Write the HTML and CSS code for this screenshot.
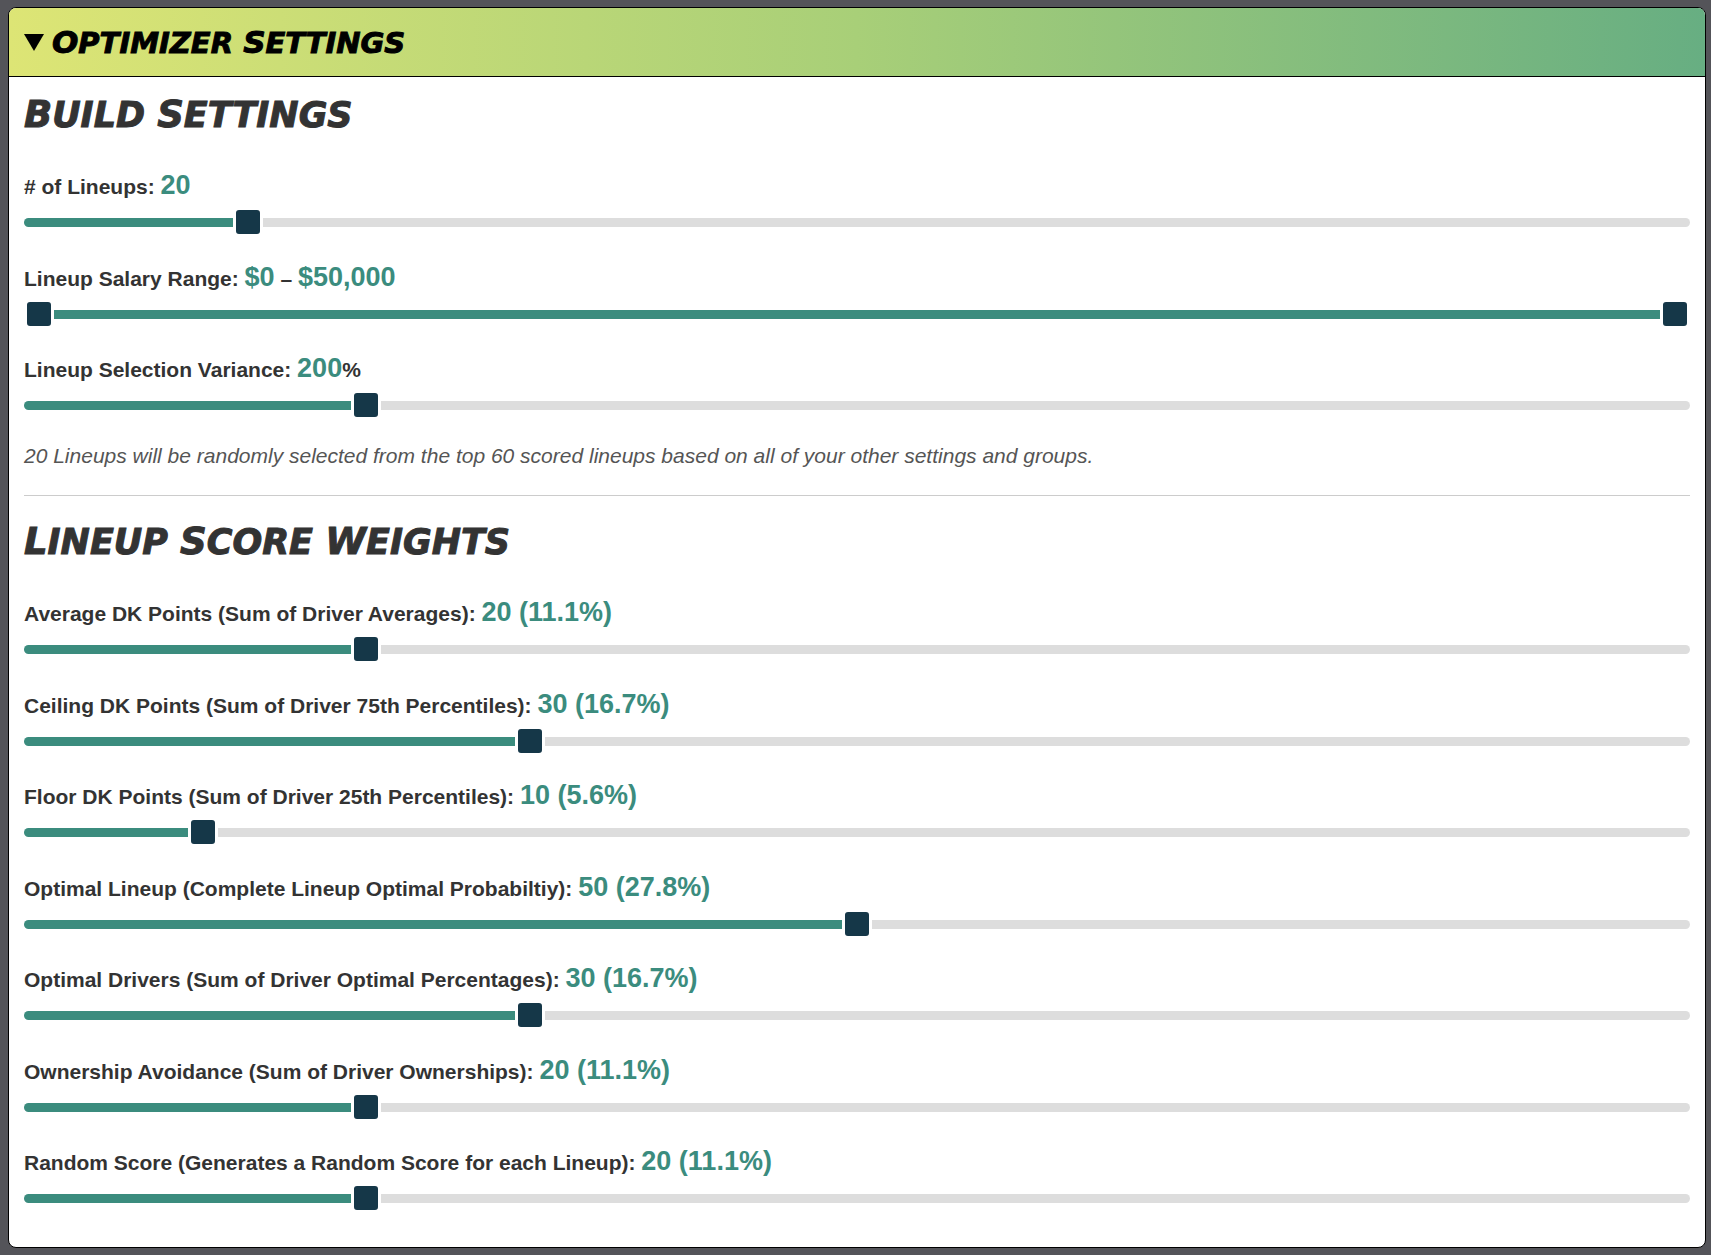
FILE: index.html
```html
<!DOCTYPE html>
<html lang="en">
<head>
    <meta charset="UTF-8">
    <meta name="viewport" content="width=device-width, initial-scale=1.0">
    <title>Optimizer Settings</title>
    <link rel="stylesheet" href="styles.css">
</head>
<body>
    <details class="panel" open>
        <summary class="panel-header">
            <svg class="arrow" viewBox="0 0 20 17" aria-hidden="true"><path d="M0 0H20L10 17Z"/></svg>
            <h2 class="title"><span>Optimizer</span> <span>Settings</span></h2>
        </summary>
        <div class="panel-body">
            <section>
                <h3 class="title"><span>Build</span> <span>Settings</span></h3>
                <div class="setting">
                    <label for="lineups"># of Lineups: <output id="lineupsValue">20</output></label>
                    <input type="range" id="lineups" min="1" max="150" value="20">
                </div>
                <div class="setting">
                    <label for="minSalary">Lineup Salary Range: <output id="minSalaryValue">$0</output> – <output id="maxSalaryValue">$50,000</output></label>
                    <div class="double-range">
                        <input type="range" id="minSalary" min="0" max="50000" step="100" value="0">
                        <input type="range" id="maxSalary" min="0" max="50000" step="100" value="50000" aria-label="Maximum lineup salary">
                    </div>
                </div>
                <div class="setting">
                    <label for="variance">Lineup Selection Variance: <output id="varianceValue">200</output>%</label>
                    <input type="range" id="variance" min="0" max="1000" step="10" value="200">
                </div>
                <p class="note" id="note">20 Lineups will be randomly selected from the top 60 scored lineups based on all of your other settings and groups.</p>
            </section>
            <hr>
            <section>
                <h3 class="title"><span>Lineup</span> <span>Score</span> <span>Weights</span></h3>
                <div class="setting">
                    <label for="average">Average DK Points (Sum of Driver Averages): <output>20 (11.1%)</output></label>
                    <input type="range" class="weight" id="average" min="0" max="100" value="20">
                </div>
                <div class="setting">
                    <label for="ceiling">Ceiling DK Points (Sum of Driver 75th Percentiles): <output>30 (16.7%)</output></label>
                    <input type="range" class="weight" id="ceiling" min="0" max="100" value="30">
                </div>
                <div class="setting">
                    <label for="floor">Floor DK Points (Sum of Driver 25th Percentiles): <output>10 (5.6%)</output></label>
                    <input type="range" class="weight" id="floor" min="0" max="100" value="10">
                </div>
                <div class="setting">
                    <label for="optimalLineup">Optimal Lineup (Complete Lineup Optimal Probabiltiy): <output>50 (27.8%)</output></label>
                    <input type="range" class="weight" id="optimalLineup" min="0" max="100" value="50">
                </div>
                <div class="setting">
                    <label for="optimalDrivers">Optimal Drivers (Sum of Driver Optimal Percentages): <output>30 (16.7%)</output></label>
                    <input type="range" class="weight" id="optimalDrivers" min="0" max="100" value="30">
                </div>
                <div class="setting">
                    <label for="ownership">Ownership Avoidance (Sum of Driver Ownerships): <output>20 (11.1%)</output></label>
                    <input type="range" class="weight" id="ownership" min="0" max="100" value="20">
                </div>
                <div class="setting">
                    <label for="random">Random Score (Generates a Random Score for each Lineup): <output>20 (11.1%)</output></label>
                    <input type="range" class="weight" id="random" min="0" max="100" value="20">
                </div>
            </section>
        </div>
    </details>

    <script>
        const $ = id => document.getElementById(id);
        const weights = [...document.querySelectorAll('.weight')];

        function fraction(input) {
            return (input.value - input.min) / (input.max - input.min);
        }

        function update() {
            document.querySelectorAll('input[type=range]').forEach(input => {
                input.style.setProperty('--pos', fraction(input));
            });

            const range = document.querySelector('.double-range');
            range.style.setProperty('--from', fraction($('minSalary')));
            range.style.setProperty('--to', fraction($('maxSalary')));

            const lineups = Number($('lineups').value);
            const variance = Number($('variance').value);
            $('lineupsValue').textContent = lineups;
            $('minSalaryValue').textContent = '$' + Number($('minSalary').value).toLocaleString('en-US');
            $('maxSalaryValue').textContent = '$' + Number($('maxSalary').value).toLocaleString('en-US');
            $('varianceValue').textContent = variance;
            const pool = Math.round(lineups * (1 + variance / 100));
            $('note').textContent = `${lineups} Lineups will be randomly selected from the top ${pool} scored lineups based on all of your other settings and groups.`;

            // Each weight is also shown as a share of the total
            const total = weights.reduce((sum, w) => sum + Number(w.value), 0) || 1;
            weights.forEach(w => {
                const share = (w.value / total * 100).toFixed(1);
                w.labels[0].querySelector('output').textContent = `${w.value} (${share}%)`;
            });
        }

        document.addEventListener('input', update);
        update();
    </script>
</body>
</html>
```
FILE: styles.css
```css
* {
    box-sizing: border-box;
}
body {
    margin: 7px 5px 5px 8px;
    background-color: #545459;
    color: #333;
    font-family: "Liberation Sans", Arial, sans-serif;
    font-size: 21px;
    line-height: 1.5;
}
.panel {
    background: white;
    border: 1px solid black;
    border-radius: 8px;
    overflow: hidden;
}
.panel-header {
    display: flex;
    align-items: center;
    gap: 8px;
    height: 69px;
    padding: 0 15px;
    border-bottom: 1px solid black;
    background: linear-gradient(to right, #dde575, #a8cf78 50%, #67ae82);
    color: black;
    cursor: pointer;
    list-style: none;
}
.arrow {
    width: 20px;
    height: 17px;
}
.title {
    margin: 0;
    font-family: "DejaVu Sans", Verdana, sans-serif;
    font-weight: bold;
    font-style: italic;
    text-transform: uppercase;
    -webkit-text-stroke: 1px currentColor;
}
.title span {
    display: inline-block;
}
h2.title {
    font-size: 29px;
    line-height: 36px;
}
h2.title span::first-letter {
    font-size: 31px;
}
h3.title {
    margin-bottom: 29px;
    font-size: 35px;
    line-height: 42px;
}
h3.title span::first-letter {
    font-size: 37px;
}
.panel-body {
    padding: 17px 15px 14px;
}
.setting {
    margin-bottom: 19px;
}
.setting label {
    display: block;
    margin-bottom: 2px;
    font-weight: bold;
}
.setting output {
    color: #3b8c7e;
    font-size: 27px;
}
input[type=range] {
    -webkit-appearance: none;
    appearance: none;
    display: block;
    width: 100%;
    height: 30px;
    margin: 0;
    background: none;
    cursor: pointer;
}
input[type=range]::-webkit-slider-runnable-track {
    height: 9px;
    border-radius: 5px;
    background: linear-gradient(#3b8c7e, #3b8c7e) 0 0 / calc(15px + (100% - 30px) * var(--pos)) 100% no-repeat #ddd;
}
input[type=range]::-webkit-slider-thumb {
    -webkit-appearance: none;
    width: 30px;
    height: 30px;
    margin-top: -11px;
    border: 3px solid white;
    border-radius: 6px;
    background: #153748;
}
/* two sliders stacked on one track */
.double-range {
    display: grid;
    align-items: center;
}
.double-range::before {
    content: "";
    grid-area: 1 / 1;
    height: 9px;
    border-radius: 5px;
    background: linear-gradient(#3b8c7e, #3b8c7e) calc(15px * (1 - var(--from))) 0 / calc(100% * (var(--to) - var(--from))) 100% no-repeat #ddd;
}
.double-range input[type=range] {
    grid-area: 1 / 1;
    pointer-events: none;
}
.double-range input[type=range]::-webkit-slider-runnable-track {
    background: none;
}
.double-range input[type=range]::-webkit-slider-thumb {
    pointer-events: auto;
}
.note {
    margin: 0;
    color: #555;
    font-style: italic;
}
hr {
    margin: 24px 0 25px;
    border: 0;
    border-top: 1px solid #ccc;
}
```
